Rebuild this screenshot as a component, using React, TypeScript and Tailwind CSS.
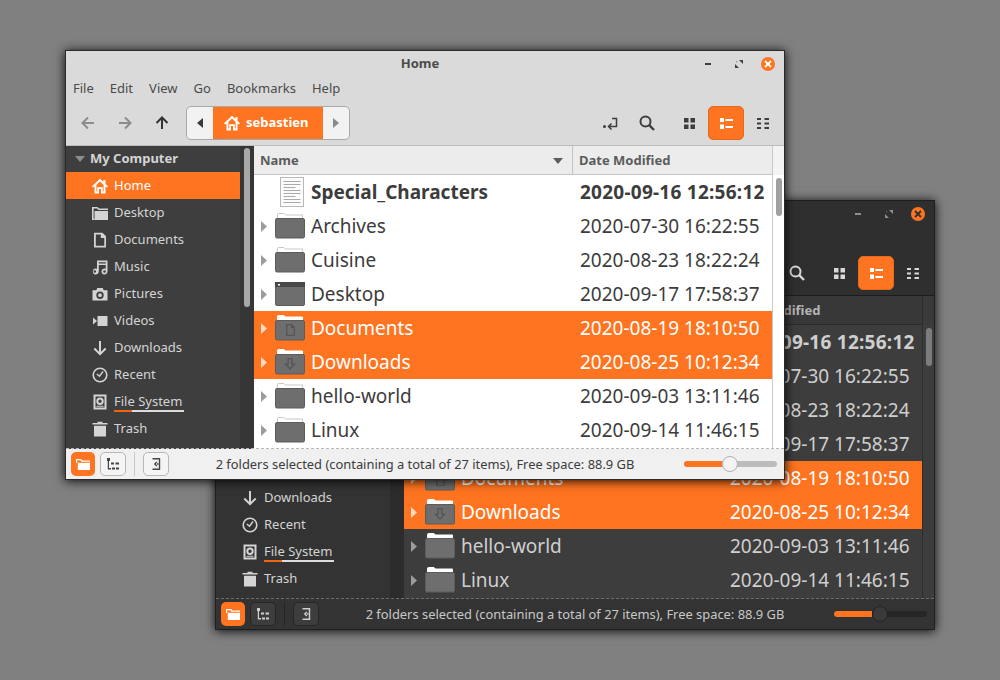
import React from "react";

const FONT = '"Noto Sans", "Open Sans", sans-serif';

type Theme = {
  frame: string; bar: string; text: string; nav: string; navUp: string; tool: string;
  pathBg: string; pathArrow: string; header: string; trackHeader: string; headerText: string; headerLine: string; list: string; listLine: string;
  rowText: string; track: string; sidebar: string; sideTrack: string; thumb: string; listThumb: string;
  status: string; statusText: string; btn: string; btnIcon: string; sep: string; sliderTrack: string; knob: string; topLine: string;
  dash: string; closeX: string; ctl: string;
};

const light: Theme = {
  frame: "border-[#2a2a2a]", bar: "bg-[#dadada]", text: "text-[#4a4a4a]",
  nav: "text-[#8c8c8c]", navUp: "text-[#333333]", tool: "text-[#3d3d3d]",
  pathBg: "bg-[#f2f2f2] border-[#a8a8a8]", pathArrow: "text-[#3a3a3a]", header: "bg-[#ececec]", trackHeader: "bg-[#f3f3f3]", headerText: "text-[#5c5c5c]",
  headerLine: "border-[#c4c4c4]", list: "bg-white", listLine: "border-[#c8c8c8]", rowText: "text-[#3c3c3c]",
  track: "bg-white", sidebar: "bg-[#3e3e3e]", sideTrack: "bg-[#363636]", thumb: "bg-[#a8a8a8]", listThumb: "bg-[#a0a0a0]",
  status: "bg-[#f0f0f0]", statusText: "text-[#3c3c3c]", btn: "bg-[#f4f4f4] border-[#b8b8b8]", btnIcon: "text-[#444444]",
  sep: "bg-[#c8c8c8]", sliderTrack: "bg-[#bcbcbc]", knob: "bg-[#f4f4f4] border-[#b0b0b0]", topLine: "border-[#bdbdbd]",
  dash: "border-[#b8b8b8]", closeX: "text-white", ctl: "text-[#3f3f3f]",
};

const dark: Theme = {
  frame: "border-[#1f1f1f]", bar: "bg-[#2f2f2f]", text: "text-[#d0d0d0]",
  nav: "text-[#8c8c8c]", navUp: "text-[#e0e0e0]", tool: "text-[#d8d8d8]",
  pathBg: "bg-[#3a3a3a] border-[#1f1f1f]", pathArrow: "text-[#d8d8d8]", header: "bg-[#383838]", trackHeader: "bg-[#3a3a3a]", headerText: "text-[#b4b4b4]",
  headerLine: "border-[#2a2a2a]", list: "bg-[#3d3d3d]", listLine: "border-[#2d2d2d]", rowText: "text-[#cfcfcf]",
  track: "bg-[#3d3d3d]", sidebar: "bg-[#333333]", sideTrack: "bg-[#2c2c2c]", thumb: "bg-[#8a8a8a]", listThumb: "bg-[#7c7c7c]",
  status: "bg-[#333333]", statusText: "text-[#c8c8c8]", btn: "bg-[#3d3d3d] border-[#262626]", btnIcon: "text-[#d0d0d0]",
  sep: "bg-[#262626]", sliderTrack: "bg-[#262626]", knob: "bg-[#3a3a3a] border-[#222222]", topLine: "border-[#1d1d1d]",
  dash: "border-[#6a6a6a]", closeX: "text-[#2f2f2f]", ctl: "text-[#8f8f8f]",
};

const S = ({ children, size = 16, className = "" }: { children: React.ReactNode; size?: number; className?: string }) => (
  <svg width={size} height={size} viewBox="0 0 16 16" className={`shrink-0 ${className}`} fill="currentColor">{children}</svg>
);

const HomeI = () => <S><path fillRule="evenodd" d="M8 .8 0 8.200 1.200 9.400 2.500 8.300V15.500H7V11h2v4.500h4.500V8.300L14.800 9.400 16 8.200 13.500 5.900V2h-2.200v1.900zM8 3.600l3.600 3.300V13.600h-.8V9.200H5.200V13.600h-.8V6.900z" /></S>;
const FolderI = () => <S><path d="M0 2h5.500L7 3.500h9v1.600H6.300L5 3.600H1.600V9H0z" /><path d="M2.500 6h13.500v9H2.500z" /><path d="M0 9h1.600v4.500H2.500V15H0z" /></S>;
const DocI = () => <S><path fillRule="evenodd" d="M2 .8h8.500L14 4.300V15.500H2zM3.800 2.500V13.800h8.500V6H8.800V2.500z" /></S>;
const MusicI = () => <S><path fillRule="evenodd" d="M5 1.500h10.500V12.500a3 3 0 1 1-1.800-2.700V6H6.800v6.500a3 3 0 1 1-1.800-2.700zM6.800 3.200v1.200h7V3.200zM2.800 11.200a1.300 1.300 0 1 0 0 2.600 1.300 1.300 0 0 0 0-2.600zM12.500 11.200a1.300 1.300 0 1 0 0 2.600 1.300 1.300 0 0 0 0-2.600z" /></S>;
const CamI = () => <S><path fillRule="evenodd" d="M5.300 2h5.400l1 2.300H15.500V14.500H.5V4.300H4.300zM8 5.500a3.700 3.700 0 1 0 0 7.400 3.700 3.700 0 0 0 0-7.400zM8 7.300a1.900 1.900 0 1 1 0 3.800 1.900 1.900 0 0 1 0-3.800z" /></S>;
const VideoI = () => <S><path d="M5.500 3h10v10h-10zM1 4.500 5 8 1 11.500z" /></S>;
const DownI = () => <S><path fill="none" stroke="currentColor" strokeWidth="2" d="M8 1V14M2.300 8.500 8 14.200 13.700 8.500" /></S>;
const ClockI = () => <S><circle cx="8" cy="8" r="6.800" fill="none" stroke="currentColor" strokeWidth="1.600" /><path fill="none" stroke="currentColor" strokeWidth="1.400" d="M4.800 7 7.500 9.200 11 4.500" /></S>;
const DiskI = () => <S><path fillRule="evenodd" d="M1.500 .5h13v15h-13zM3.500 2.500v11h9v-11zM8 3.500a3.700 3.700 0 1 1 0 7.400 3.700 3.700 0 0 1 0-7.400zM8 5.500a1.700 1.700 0 1 0 0 3.400 1.700 1.700 0 0 0 0-3.400zM4.500 11.800h7v1h-7z" /></S>;
const TrashI = () => <S><path d="M5.500 .8h5V2H15.500v1.500H.5V2h5zM2 4.800h12V15.500H2z" /></S>;

const ctlMin = <svg width="10" height="10" viewBox="0 0 10 10" fill="currentColor"><rect x="1" y="4" width="6" height="2" /></svg>;
const ctlMax = <svg width="10" height="10" viewBox="0 0 10 10" fill="currentColor"><path d="M5 1h4v4zM1 5l4 4H1z" /><path d="M2 2h2L2 4z" opacity=".4" /></svg>;

const Arrow = ({ d, className }: { d: string; className: string }) => (
  <S className={className}><path fill="none" stroke="currentColor" strokeWidth="2" d={d} /></S>
);

const side = [
  { n: "Home", I: HomeI, active: true },
  { n: "Desktop", I: FolderI },
  { n: "Documents", I: DocI },
  { n: "Music", I: MusicI },
  { n: "Pictures", I: CamI },
  { n: "Videos", I: VideoI },
  { n: "Downloads", I: DownI },
  { n: "Recent", I: ClockI },
  { n: "File System", I: DiskI, disk: true },
  { n: "Trash", I: TrashI },
];

type Row = { n: string; d: string; kind: string; sel?: boolean; bold?: boolean };
const rows: Row[] = [
  { n: "Special_Characters", d: "2020-09-16 12:56:12", kind: "text", bold: true },
  { n: "Archives", d: "2020-07-30 16:22:55", kind: "folder" },
  { n: "Cuisine", d: "2020-08-23 18:22:24", kind: "folder" },
  { n: "Desktop", d: "2020-09-17 17:58:37", kind: "desktop" },
  { n: "Documents", d: "2020-08-19 18:10:50", kind: "documents", sel: true },
  { n: "Downloads", d: "2020-08-25 10:12:34", kind: "downloads", sel: true },
  { n: "hello-world", d: "2020-09-03 13:11:46", kind: "folder" },
  { n: "Linux", d: "2020-09-14 11:46:15", kind: "folder" },
];

const FolderBig = ({ kind, solidTab }: { kind: string; solidTab: boolean }) => (
  <svg width="32" height="28" viewBox="0 0 32 28" className="shrink-0">
    {kind === "desktop" ? (
      <>
        <rect x="1.500" y="2.500" width="29" height="23" rx="1.500" fill="#6e6e6e" stroke="#5e5e5e" />
        <rect x="1" y="2" width="30" height="5" fill="#484848" />
        <rect x="4" y="4" width="2" height="1.500" fill="#ffffff" />
      </>
    ) : (
      <>
        <path
          d="M3.500 7V2.500Q3.500 1.500 4.500 1.500H10L11.500 3H28.500V7Z"
          fill={solidTab ? "#ffffff" : "none"}
          stroke={solidTab ? "#ffffff" : "#c8c8c8"}
        />
        <rect x="1.500" y="6.500" width="29" height="19.500" rx="1.500" fill="#6e6e6e" stroke="#5c5c5c" />
        {kind === "documents" && <path fillRule="evenodd" d="M12 10H18L21 13V22H12ZM13.300 11.300V20.700H19.700V14H17V11.300Z" fill="#555555" />}
        {kind === "downloads" && <path fillRule="evenodd" d="M13.500 10h5v5.500H22L16 22 10 15.500h3.500ZM14.800 11.300V16.800H13L16 20 19 16.800H17.200V11.300Z" fill="#555555" />}
      </>
    )}
  </svg>
);

const TextFile = () => (
  <svg width="26" height="32" viewBox="0 0 26 32" className="shrink-0 ml-[5px]">
    <rect x="1.500" y="1.500" width="23" height="29" fill="#fbfbfb" stroke="#b8b8b8" />
    {[5, 8, 11, 14, 17, 20, 23, 26].map((y, i) => (
      <rect key={y} x="4.500" y={y} width={i % 3 === 2 ? 12 : 17} height="1" fill="#aaaaaa" />
    ))}
  </svg>
);

const Window = ({ t, pos, isLight }: { t: Theme; pos: string; isLight: boolean }) => (
  <div className={`absolute ${pos} w-[720px] h-[430px] flex flex-col border ${t.frame} shadow-[0_1px_10px_rgba(0,0,0,0.95)] overflow-hidden`} style={{ fontFamily: FONT }}>
    <div className={`${t.bar} flex flex-col shrink-0 h-[95px] border-b ${t.topLine}`}>
      <div className="relative h-[25px] flex items-center shrink-0">
        <div className={`w-full pr-[10px] text-center text-[13px] font-bold ${t.text} pt-[1px]`}>Home</div>
        <div className="absolute right-[1px] top-0 h-full flex items-center">
          <div className={`w-[30px] flex justify-center ${t.ctl}`}>{ctlMin}</div>
          <div className={`w-[29px] flex justify-center ${t.ctl}`}>{ctlMax}</div>
          <div className="w-[30px] flex justify-center">
            <div className={`w-[14px] h-[14px] rounded-full bg-[#fe7420] flex items-center justify-center ${t.closeX}`}>
              <svg width="8" height="8" viewBox="0 0 8 8"><path d="M1 1l6 6M7 1 1 7" stroke="currentColor" strokeWidth="1.800" /></svg>
            </div>
          </div>
        </div>
      </div>
      <div className={`h-[25px] flex items-center pl-[7px] gap-[16px] text-[13px] ${t.text} shrink-0`}>
        <span>File</span><span>Edit</span><span>View</span><span>Go</span><span>Bookmarks</span><span>Help</span>
      </div>
      <div className="flex-1 flex items-center pl-[3px] pr-[3px]">
        <div className="w-[37px] flex justify-center"><Arrow className={t.nav} d="M14 8H2.500M8 2.500 2.500 8 8 13.500" /></div>
        <div className="w-[37px] flex justify-center"><Arrow className={t.nav} d="M2 8h11.500M8 2.500 13.500 8 8 13.500" /></div>
        <div className="w-[37px] flex justify-center"><Arrow className={t.navUp} d="M8 14V2.500M2.500 8 8 2.500 13.500 8" /></div>
        <div className={`ml-[6px] w-[164px] h-[34px] flex rounded-[5px] border overflow-hidden ${t.pathBg}`}>
          <div className="w-[26px] flex items-center justify-center">
            <svg width="6" height="10" viewBox="0 0 6 10" className={t.pathArrow} fill="currentColor"><path d="M6 0v10L0 5z" /></svg>
          </div>
          <div className="w-[110px] bg-[#fe7420] text-white flex items-center pl-[11px] gap-[6px] text-[13px] font-bold">
            <HomeI /><span>sebastien</span>
          </div>
          <div className="flex-1 flex items-center justify-center text-[#8a8a8a]">
            <svg width="6" height="10" viewBox="0 0 6 10" fill="currentColor"><path d="M0 0v10l6-5z" /></svg>
          </div>
        </div>
        <div className="flex-1" />
        <div className={`w-[36px] flex justify-center ${t.tool}`}>
          <S><circle cx="2.500" cy="11.500" r="1.500" /><path fill="none" stroke="currentColor" strokeWidth="1.500" d="M10 3.500h4.500V11.500H7M9.500 8.500 6.500 11.500 9.500 14.500" /></S>
        </div>
        <div className={`ml-[1px] w-[36px] flex justify-center ${t.tool}`}>
          <S><circle cx="6.500" cy="6.500" r="5" fill="none" stroke="currentColor" strokeWidth="2" /><path stroke="currentColor" strokeWidth="2.400" d="M10.200 10.200 15 15" /></S>
        </div>
        <div className={`ml-[6px] w-[36px] flex justify-center ${t.tool}`}>
          <svg width="11" height="11" viewBox="0 0 11 11" fill="currentColor"><path d="M0 0h4.500v4.500H0zM6.500 0H11v4.500H6.500zM0 6.500h4.500V11H0zM6.500 6.500H11V11H6.500z" /></svg>
        </div>
        <div className="ml-[1px] w-[36px] h-[34px] rounded-[5px] bg-[#fe7420] flex items-center justify-center text-white border border-[#e5691d]">
          <svg width="13" height="11" viewBox="0 0 13 11" fill="currentColor"><path d="M0 0h4v4H0zM0 6.500h4V11H0zM5.500 1h7.500v2H5.500zM5.500 8h7.500v2H5.500z" /></svg>
        </div>
        <div className={`ml-[1px] w-[36px] flex justify-center ${t.tool}`}>
          <svg width="12" height="11" viewBox="0 0 12 11" fill="currentColor"><path d="M0 0h4v2H0zM7.500 0H12v2H7.500zM0 4.500h4v2H0zM7.500 4.500H12v2H7.500zM0 9h4v2H0zM7.500 9H12v2H7.500z" /></svg>
        </div>
      </div>
    </div>

    <div className="relative flex-1 flex min-h-0 overflow-hidden">
      <div className={`w-[174px] shrink-0 ${t.sidebar} text-[#d4d4d4] overflow-hidden`}>
        <div className="h-[26px] flex items-center pl-[9px] gap-[5px]">
          <svg width="10" height="6" viewBox="0 0 10 6" fill="#8e8e8e"><path d="M0 0h10L5 6z" /></svg>
          <span className="text-[13px] font-bold">My Computer</span>
        </div>
        {side.map(({ n, I, active, disk }) => (
          <div key={n} className={`h-[27px] flex items-center pl-[26px] gap-[6px] text-[13px] ${active ? "bg-[#fe7420] text-white" : ""}`}>
            <span className="w-[16px] shrink-0 flex justify-center"><I /></span>
            <span className="relative">
              {n}
              {disk && (
                <span className="absolute left-0 right-[-2px] bottom-[-1px] h-[2px] flex bg-[#dcdcdc]">
                  <span className="w-[18px] bg-[#f0640f]" />
                </span>
              )}
            </span>
          </div>
        ))}
      </div>
      <div className={`w-[14px] shrink-0 ${t.sideTrack} pt-[2px] flex justify-center`}>
        <div className={`w-[6px] h-[159px] rounded-full ${t.thumb}`} />
      </div>
      <div className={`w-[519px] shrink-0 flex flex-col ${t.list} border-r ${t.listLine} overflow-hidden`}>
        <div className={`h-[29px] shrink-0 flex ${t.header} border-b ${t.headerLine} text-[13px] font-bold ${t.headerText}`}>
          <div className={`w-[319px] shrink-0 flex items-center justify-between pl-[6px] pr-[9px] pt-[1px] border-r ${t.headerLine}`}>
            <span>Name</span>
            <svg width="10" height="6" viewBox="0 0 10 6" fill="currentColor"><path d="M0 0h10L5 6z" /></svg>
          </div>
          <div className="flex-1 flex items-center pl-[6px] pt-[1px]">Date Modified</div>
        </div>
        {rows.map((r) => (
          <div key={r.n} className={`h-[34px] shrink-0 flex items-center ${r.sel ? "bg-[#fe7420] text-white" : t.rowText}`}>
            <div className="w-[18px] shrink-0 flex justify-end pr-[5px]">
              {r.kind !== "text" && (
                <svg width="6" height="11" viewBox="0 0 6 11" fill={r.sel ? "#ffd9c0" : "#9c9c9c"}><path d="M0 0v11l6-5.500z" /></svg>
              )}
            </div>
            <div className="w-[39px] shrink-0 flex justify-start pl-[2px]">
              {r.kind === "text" ? <TextFile /> : <FolderBig kind={r.kind} solidTab={!!r.sel || !isLight} />}
            </div>
            <div className={`w-[262px] shrink-0 text-[19px] whitespace-nowrap ${r.bold ? "font-bold" : ""}`}>{r.n}</div>
            <div className={`text-[19px] whitespace-nowrap pl-[7px] ${r.bold ? "font-bold tracking-[0.25px]" : ""}`}>{r.d}</div>
          </div>
        ))}
      </div>
      <div className={`flex-1 ${t.track} flex flex-col items-center`}>
        <div className={`w-full h-[29px] ${t.trackHeader}`} />
        <div className={`mt-[3px] w-[6px] h-[38px] rounded-full ${t.listThumb}`} />
      </div>
      <div className={`absolute left-0 right-0 bottom-0 h-0 border-t border-dashed ${t.dash}`} />
    </div>

    <div className={`h-[30px] shrink-0 ${t.status} flex items-center pl-[5px]`}>
      <div className="w-[24px] h-[24px] rounded-[5px] bg-[#fe7420] flex items-center justify-center text-white">
        <svg width="14" height="12" viewBox="0 0 14 12" fill="currentColor"><path d="M0 1h5l1.500 1.500H14v1.200H5.500L4.500 2.200H1.200V5H0zM1.800 4.800H14V12H1.800z" /></svg>
      </div>
      <div className={`ml-[5px] w-[26px] h-[24px] rounded-[5px] border flex items-center justify-center ${t.btn} ${t.btnIcon}`}>
        <svg width="14" height="14" viewBox="0 0 14 14" fill="currentColor"><path d="M1 1h3v3H3v7h2v1.500H1.800V4H1zM5 5.500h3v2H5zM9.500 5.500H13v2H9.500zM6 10.500h3v2H6zM10 10.500h3v2h-3z" /></svg>
      </div>
      <div className={`ml-[8px] w-[1px] h-[24px] ${t.sep}`} />
      <div className={`ml-[8px] w-[26px] h-[24px] rounded-[5px] border flex items-center justify-center ${t.btn} ${t.btnIcon}`}>
        <svg width="12" height="14" viewBox="0 0 12 14" fill="none" stroke="currentColor" strokeWidth="1.400"><path d="M2.500 1.800H9.500V12.200H2.500" /><path d="M6.800 5 4.800 7l2 2" /><path d="M7 7h1.500" /></svg>
      </div>
      <div className={`flex-1 text-center text-[12.9px] pt-[1px] pr-[3px] ${t.statusText} whitespace-nowrap`}>
        2 folders selected (containing a total of 27 items), Free space: 88.9 GB
      </div>
      <div className={`relative w-[93px] h-[6px] rounded-full ${t.sliderTrack} mr-[7px]`}>
        <div className="w-[38px] h-full rounded-l-full bg-[#fe7420]" />
        <div className={`absolute left-[38px] top-[-5px] w-[16px] h-[16px] rounded-full border ${t.knob}`} />
      </div>
    </div>
  </div>
);

export default function App() {
  return (
    <div className="relative w-[1000px] h-[680px] bg-[#808080] overflow-hidden">
      <Window t={dark} pos="left-[215px] top-[200px]" isLight={false} />
      <Window t={light} pos="left-[65px] top-[50px]" isLight={true} />
    </div>
  );
}
